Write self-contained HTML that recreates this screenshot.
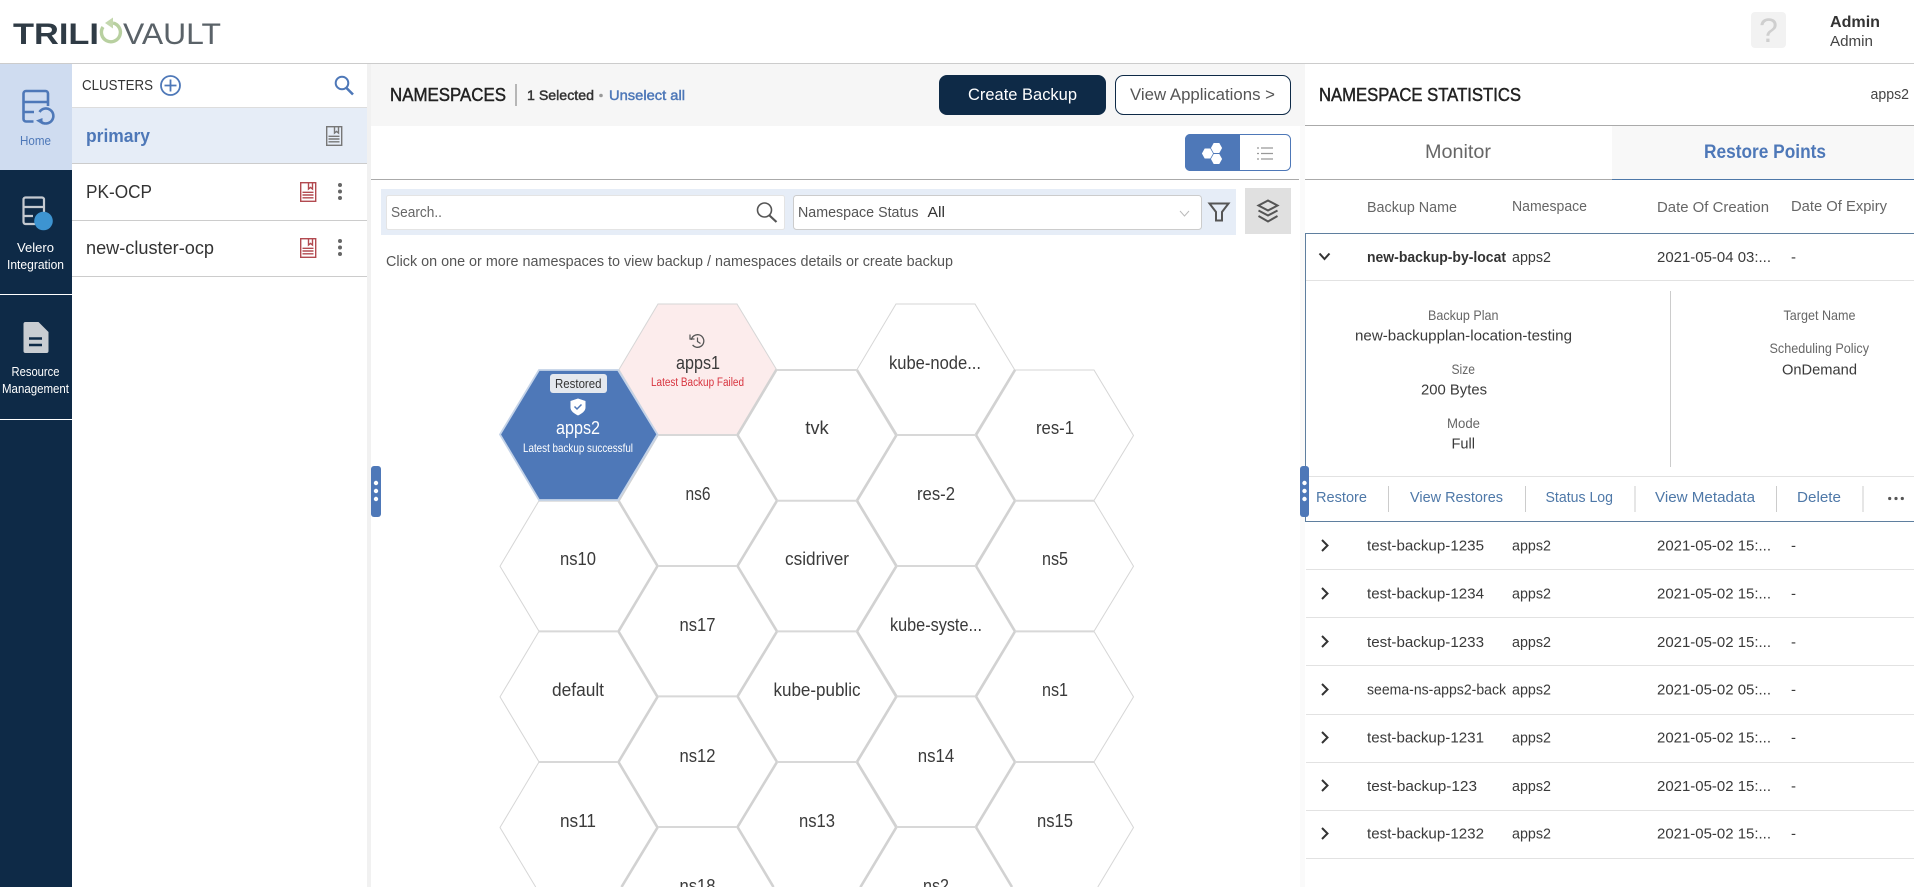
<!DOCTYPE html>
<html lang="en"><head><meta charset="utf-8"><title>TrilioVault</title>
<style>
html,body{margin:0;padding:0;background:#fff;overflow:hidden;width:1914px;height:887px}
svg{display:block}
text{font-family:"Liberation Sans",Arial,sans-serif;font-size:15px;fill:#3a3a3a}
.hx{font-size:18px;fill:#3a3a3a;text-anchor:middle}
.g{fill:#666}
.b{fill:#4e78a8}
.m{stroke:currentColor;stroke-width:.45}
.side{font-size:13px;fill:#fff;text-anchor:middle}
</style></head><body>
<svg xmlns="http://www.w3.org/2000/svg" width="1914" height="887" viewBox="0 0 1914 887">
<defs>
<polygon id="hex" points="0,65.5 39,0 118,0 157.5,65.5 118,130.5 39,130.5" fill="none" stroke="#d6d6d6" stroke-width="1"/>
<polyline id="hexa" points="35.7,125 0,65.5 39,0 118,0 157.5,65.5 121.8,125" fill="none" stroke="#d6d6d6" stroke-width="1"/>
<polyline id="hexb" points="3.3,59.5 39,0 118,0 154.2,59.5" fill="none" stroke="#d6d6d6" stroke-width="1"/>
<g id="bk" fill="none" stroke="currentColor" stroke-width="1.4"><rect x=".7" y=".7" width="15" height="18.6"/><path d="M8.5 1V7l2-1.6L12.5 7V1M2.5 10.3H13.5M2.5 13H13.5M2.5 15.8H13.5"/></g>
<polygon id="sh" points="-5.6,0 -2.8,-5 2.8,-5 5.6,0 2.8,5 -2.8,5" fill="#fff"/>
</defs>

<!-- top header -->
<rect x="0" y="63" width="1914" height="1" fill="#ccc"/>
<text x="13" y="44" textLength="86" lengthAdjust="spacingAndGlyphs" style="font-size:30px;fill:#2f3b45;font-weight:700">TRILI</text>
<path d="M113 23A9.5 9.5 0 1 1 103 27" fill="none" stroke="#b8d0a0" stroke-width="3.4"/>
<path d="M105 23L113 17.500V28.500Z" fill="#c4d8ae"/>
<text x="123" y="44" textLength="98" lengthAdjust="spacingAndGlyphs" style="font-size:30px;fill:#5a6268">VAULT</text>
<rect x="1751" y="12" width="35" height="36" rx="4" fill="#f2f2f2"/>
<text x="1768.500" y="42" text-anchor="middle" style="font-size:34px;fill:#cfcfcf">?</text>
<text x="1830" y="27" textLength="50" lengthAdjust="spacingAndGlyphs" style="font-size:16px;font-weight:700;fill:#333">Admin</text>
<text x="1830" y="46" textLength="43" lengthAdjust="spacingAndGlyphs" style="font-size:15px;fill:#444">Admin</text>

<!-- nav rail -->
<rect x="0" y="64" width="72" height="823" fill="#0e2a47"/>
<rect x="0" y="64" width="72" height="106" fill="#cfdcf0"/>
<g fill="none" stroke="#4e78b8" stroke-width="2.600">
<path d="M33.500 121.500H26a2.500 2.500 0 0 1-2.500-2.500V93.500A2.500 2.500 0 0 1 26 91H45.500a2.500 2.500 0 0 1 2.500 2.500V106M24 102H47.500M24 112H34"/>
<path d="M39.500 112A7.500 7.500 0 1 1 41 121.700"/>
</g>
<path d="M36 120.500L42.500 118V124.500Z" fill="#4e78b8"/>
<text class="side" x="35.500" y="145" style="fill:#4e78b8" textLength="31" lengthAdjust="spacingAndGlyphs">Home</text>
<g fill="none" stroke="#c5cad1" stroke-width="2.200">
<path d="M35 224H25.500a2 2 0 0 1-2-2V199.500a2 2 0 0 1 2-2H42a2 2 0 0 1 2 2V212M24 207H44M24 216H33"/>
</g>
<circle cx="43.500" cy="221" r="9.300" fill="#3d94d1"/>
<text class="side" x="35.500" y="252" textLength="37" lengthAdjust="spacingAndGlyphs">Velero</text>
<text class="side" x="35.500" y="269" textLength="57" lengthAdjust="spacingAndGlyphs">Integration</text>
<rect x="0" y="294" width="72" height="1" fill="#fff"/>
<path d="M25.500 322H38.500L48.500 332V351a2 2 0 0 1-2 2H25.500a2 2 0 0 1-2-2V324a2 2 0 0 1 2-2Z" fill="#c9cdd2"/>
<path d="M29 338.500H42M29 345H42" stroke="#0e2a47" stroke-width="2.600"/>
<text class="side" x="35.500" y="376" textLength="48" lengthAdjust="spacingAndGlyphs">Resource</text>
<text class="side" x="35.500" y="393" textLength="67" lengthAdjust="spacingAndGlyphs">Management</text>
<rect x="0" y="419" width="72" height="1" fill="#fff"/>

<!-- clusters column -->
<rect x="367" y="64" width="4" height="823" fill="#f1f1f1"/>
<text x="82" y="90" textLength="71" lengthAdjust="spacingAndGlyphs" style="font-size:15px;fill:#333">CLUSTERS</text>
<circle cx="170.500" cy="85.500" r="9.500" fill="none" stroke="#4e78b8" stroke-width="1.800"/>
<path d="M170.500 79.500V91.500M164.500 85.500H176.500" stroke="#4e78b8" stroke-width="1.800"/>
<circle cx="342" cy="83" r="6.300" fill="none" stroke="#4e78b8" stroke-width="2"/>
<path d="M346.500 88L353 94.500" stroke="#4e78b8" stroke-width="2.600"/>
<rect x="72" y="107" width="295" height="1" fill="#ddd"/>
<rect x="72" y="108" width="295" height="55" fill="#e6edf7"/>
<rect x="72" y="163" width="295" height="1" fill="#ccc"/>
<text x="86" y="142" textLength="64" lengthAdjust="spacingAndGlyphs" style="font-size:18px;font-weight:700;fill:#4e78b8">primary</text>
<use href="#bk" x="326" y="126" color="#777"/>
<text x="86" y="198" textLength="66" lengthAdjust="spacingAndGlyphs" style="font-size:18px;fill:#333">PK-OCP</text>
<use href="#bk" x="300" y="182" color="#b24a50"/>
<circle cx="340" cy="185" r="2" fill="#666"/><circle cx="340" cy="191.500" r="2" fill="#666"/><circle cx="340" cy="198" r="2" fill="#666"/>
<rect x="72" y="220" width="295" height="1" fill="#ccc"/>
<text x="86" y="254" textLength="128" lengthAdjust="spacingAndGlyphs" style="font-size:18px;fill:#333">new-cluster-ocp</text>
<use href="#bk" x="300" y="238" color="#b24a50"/>
<circle cx="340" cy="241" r="2" fill="#666"/><circle cx="340" cy="247.500" r="2" fill="#666"/><circle cx="340" cy="254" r="2" fill="#666"/>
<rect x="72" y="276" width="295" height="1" fill="#ccc"/>

<!-- namespaces header -->
<rect x="371" y="64" width="934" height="62" fill="#f6f6f6"/>
<text x="390" y="101" textLength="116" lengthAdjust="spacingAndGlyphs" class="m" style="font-size:18px;fill:#222;color:#222">NAMESPACES</text>
<rect x="515.500" y="84" width="1" height="22" fill="#777"/>
<text x="527" y="100" textLength="67" lengthAdjust="spacingAndGlyphs" class="m" style="font-size:14px;fill:#333;color:#333">1 Selected</text>
<circle cx="601" cy="95.500" r="1.800" fill="#999"/>
<text x="609" y="100" textLength="76" lengthAdjust="spacingAndGlyphs" class="m" style="font-size:14px;fill:#4e78b8;color:#4e78b8">Unselect all</text>
<rect x="939" y="75" width="167" height="40" rx="8" fill="#0e2a47"/>
<text x="968" y="100" textLength="109" lengthAdjust="spacingAndGlyphs" style="font-size:17px;fill:#fff">Create Backup</text>
<rect x="1115.500" y="75.500" width="175" height="39" rx="8" fill="#fff" stroke="#0e2a47"/>
<text x="1130" y="100" textLength="145" lengthAdjust="spacingAndGlyphs" style="font-size:17px;fill:#555">View Applications &gt;</text>

<!-- toggle -->
<rect x="1185.500" y="134.500" width="105" height="36" rx="5" fill="#fff" stroke="#4e78b8"/>
<path d="M1240 134H1190a5 5 0 0 0-5 5V166a5 5 0 0 0 5 5H1240Z" fill="#4e78b8"/>
<use href="#sh" x="1207.500" y="153.500"/><use href="#sh" x="1216.500" y="148"/><use href="#sh" x="1216.500" y="159"/>
<path d="M1257 148H1259M1261 148H1273M1257 153.500H1259M1261 153.500H1273M1257 159H1259M1261 159H1273" stroke="#999" stroke-width="1.200"/>
<rect x="371" y="179" width="928" height="1" fill="#aaa"/>

<!-- filter bar -->
<rect x="381" y="189" width="855" height="46" fill="#e6edf7"/>
<rect x="386.500" y="195.500" width="398" height="34" rx="2" fill="#fff" stroke="#e4e4e4"/>
<text x="391" y="217" textLength="51" lengthAdjust="spacingAndGlyphs" style="font-size:15px;fill:#666">Search..</text>
<circle cx="764.500" cy="210" r="7" fill="none" stroke="#555" stroke-width="1.600"/>
<path d="M769.500 215.500L776.500 222" stroke="#555" stroke-width="2.200"/>
<rect x="793.500" y="195.500" width="408" height="34" rx="3" fill="#fff" stroke="#ccc"/>
<text x="798" y="217" textLength="120.500" lengthAdjust="spacingAndGlyphs" style="font-size:15px;fill:#555">Namespace Status</text>
<text x="927.500" y="217" textLength="17.500" lengthAdjust="spacingAndGlyphs" style="font-size:15px;fill:#333">All</text>
<path d="M1180 211L1184.500 216L1189 211" fill="none" stroke="#bbb"/>
<path d="M1209.500 203.500H1228.500L1222 212V220.500H1216V212Z" fill="none" stroke="#555" stroke-width="2"/>
<rect x="1245" y="188" width="46" height="46" fill="#e0e0e0"/>
<path d="M1268 200.500l9.500 5-9.500 5-9.500-5ZM1258.500 210.500l9.500 5 9.500-5M1258.500 216l9.500 5.500 9.500-5.500" fill="none" stroke="#555" stroke-width="2"/>
<text x="386" y="266" textLength="567" lengthAdjust="spacingAndGlyphs" style="font-size:15px;fill:#555">Click on one or more namespaces to view backup / namespaces details or create backup</text>

<!-- hex grid: thin outlines -->
<use href="#hex" x="500" y="500.700"/><use href="#hex" x="500" y="631.400"/><use href="#hexa" x="500" y="762"/>
<use href="#hex" x="619" y="435"/><use href="#hex" x="619" y="565.700"/><use href="#hex" x="619" y="696.400"/><use href="#hexb" x="619" y="827"/>
<use href="#hex" x="738" y="370"/><use href="#hex" x="738" y="500.700"/><use href="#hex" x="738" y="631.400"/><use href="#hexa" x="738" y="762"/>
<use href="#hex" x="857" y="304"/><use href="#hex" x="857" y="435"/><use href="#hex" x="857" y="565.700"/><use href="#hex" x="857" y="696.400"/><use href="#hexb" x="857" y="827"/>
<use href="#hex" x="976" y="370"/><use href="#hex" x="976" y="500.700"/><use href="#hex" x="976" y="631.400"/><use href="#hexa" x="976" y="762"/>
<polygon points="619,369.500 658,304 737,304 776.500,369.500 737,434.500 658,434.500" fill="#fcecec" stroke="#d6d6d6"/>
<polygon points="500,434.500 539,370 618,370 657.500,434.500 618,500 539,500" fill="#4e78b8"/>
<!-- hex grid: heavier shared edges -->
<g fill="none" stroke="#d2d2d2" stroke-width="2.600" stroke-linejoin="miter">
<polyline points="657.500,435 618.500,500.700 657.500,566 618.500,631.400 657.500,696.900 618.500,762 657.500,827.500 621.500,887"/>
<polyline points="776.500,369.500 737.500,435 777,500.700 737.500,566 777,631.400 737.500,696.400 777,762 737.500,827 773.500,887"/>
<polyline points="857,370 896.500,435 857,500.700 896.500,566 857,631.400 896.500,696.400 857,762 896.500,827 860.500,887"/>
<polyline points="1015,370 976,435 1015,500.700 976,566 1015,631.400 976,696.400 1015,762 976,827 1012,887"/>
</g>
<path d="M539 500.700H618M539 631.400H618M539 762H618M658 435H737M658 566H737M658 696.400H737M658 827H737M777 370H857M777 500.700H857M777 631.400H857M777 762H857M896.500 435H976M896.500 566H976M896.500 696.400H976M896.500 827H976M1015 500.700H1094M1015 631.400H1094M1015 762H1094" fill="none" stroke="#d8d8d8" stroke-width="2"/>
<polygon points="500,434.500 539,370 618,370 657.500,434.500 618,500 539,500" fill="none" stroke="#c4d3e8" stroke-width="1.800"/>

<circle cx="697.500" cy="341" r="6.300" fill="none" stroke="#555" stroke-width="1.300" stroke-dasharray="34 6" transform="rotate(190 697.500 341)"/>
<path d="M697.500 337.500V341.500L700.500 343.500M690 334.500V339H694.500" fill="none" stroke="#555" stroke-width="1.200"/>
<text class="hx" x="698" y="369" textLength="44" lengthAdjust="spacingAndGlyphs">apps1</text>
<text x="651" y="386" textLength="93" lengthAdjust="spacingAndGlyphs" style="font-size:11.500px;fill:#d8343f">Latest Backup Failed</text>

<rect x="550" y="374" width="57" height="19" rx="3" fill="#e4e8ee"/>
<text x="555" y="388" textLength="46.500" lengthAdjust="spacingAndGlyphs" style="font-size:13px;fill:#333">Restored</text>
<path d="M578 398.500L585.500 401V407.500C585.500 411 582 413.500 578 415.500C574 413.500 570.500 411 570.500 407.500V401Z" fill="#fff"/>
<path d="M574.500 406.500L577 409L581.500 404.500" fill="none" stroke="#4e78b8" stroke-width="1.500"/>
<text class="hx" x="578" y="434" textLength="44" lengthAdjust="spacingAndGlyphs" style="fill:#fff">apps2</text>
<text x="523" y="452" textLength="110" lengthAdjust="spacingAndGlyphs" style="font-size:12px;fill:#fff">Latest backup successful</text>

<text class="hx" x="817" y="434" textLength="23.500" lengthAdjust="spacingAndGlyphs">tvk</text>
<text class="hx" x="935" y="369" textLength="92" lengthAdjust="spacingAndGlyphs">kube-node...</text>
<text class="hx" x="1055" y="434" textLength="38" lengthAdjust="spacingAndGlyphs">res-1</text>
<text class="hx" x="698" y="500" textLength="25" lengthAdjust="spacingAndGlyphs">ns6</text>
<text class="hx" x="936" y="500" textLength="38" lengthAdjust="spacingAndGlyphs">res-2</text>
<text class="hx" x="578" y="565" textLength="36" lengthAdjust="spacingAndGlyphs">ns10</text>
<text class="hx" x="817" y="565" textLength="64" lengthAdjust="spacingAndGlyphs">csidriver</text>
<text class="hx" x="1055" y="565" textLength="26" lengthAdjust="spacingAndGlyphs">ns5</text>
<text class="hx" x="697.500" y="631" textLength="36" lengthAdjust="spacingAndGlyphs">ns17</text>
<text class="hx" x="936" y="631" textLength="92" lengthAdjust="spacingAndGlyphs">kube-syste...</text>
<text class="hx" x="578" y="696" textLength="52" lengthAdjust="spacingAndGlyphs">default</text>
<text class="hx" x="817" y="696" textLength="87" lengthAdjust="spacingAndGlyphs">kube-public</text>
<text class="hx" x="1055" y="696" textLength="26" lengthAdjust="spacingAndGlyphs">ns1</text>
<text class="hx" x="697.500" y="762" textLength="36" lengthAdjust="spacingAndGlyphs">ns12</text>
<text class="hx" x="936" y="762" textLength="36.500" lengthAdjust="spacingAndGlyphs">ns14</text>
<text class="hx" x="578" y="827" textLength="36" lengthAdjust="spacingAndGlyphs">ns11</text>
<text class="hx" x="817" y="827" textLength="36" lengthAdjust="spacingAndGlyphs">ns13</text>
<text class="hx" x="1055" y="827" textLength="36" lengthAdjust="spacingAndGlyphs">ns15</text>
<svg x="0" y="870" width="1914" height="17" overflow="hidden">
<text class="hx" x="697.500" y="22" textLength="36" lengthAdjust="spacingAndGlyphs">ns18</text>
<text class="hx" x="936" y="22" textLength="26" lengthAdjust="spacingAndGlyphs">ns2</text>
</svg>

<!-- right panel -->
<rect x="1300" y="126" width="5" height="761" fill="#fafafa"/>
<rect x="1305" y="64" width="609" height="823" fill="#fff"/>
<text x="1319" y="101" textLength="202" lengthAdjust="spacingAndGlyphs" class="m" style="font-size:18px;fill:#222;color:#222">NAMESPACE STATISTICS</text>
<text x="1870.500" y="99" textLength="38.500" lengthAdjust="spacingAndGlyphs" style="font-size:15px;fill:#444">apps2</text>
<rect x="1305" y="125" width="609" height="1" fill="#aaa"/>
<rect x="1612" y="126" width="302" height="53" fill="#f8f8f8"/>
<text x="1425" y="158" textLength="66" lengthAdjust="spacingAndGlyphs" style="font-size:19px;fill:#666">Monitor</text>
<text x="1704" y="158" textLength="122" lengthAdjust="spacingAndGlyphs" style="font-size:19px;font-weight:700;fill:#4e78b8">Restore Points</text>
<rect x="1305" y="179" width="307" height="1" fill="#aaa"/>
<rect x="1612" y="179" width="302" height="1" fill="#4e78a8"/>
<text class="g" x="1367" y="212" textLength="90" lengthAdjust="spacingAndGlyphs">Backup Name</text>
<text class="g" x="1512" y="211" textLength="75" lengthAdjust="spacingAndGlyphs">Namespace</text>
<text class="g" x="1657" y="212" textLength="112" lengthAdjust="spacingAndGlyphs">Date Of Creation</text>
<text class="g" x="1791" y="211" textLength="96" lengthAdjust="spacingAndGlyphs">Date Of Expiry</text>

<rect x="1305" y="233" width="609" height="1" fill="#5f7f9f"/>
<rect x="1305" y="233" width="1" height="289" fill="#5f7f9f"/>
<path d="M1319.500 253.500L1324.500 259L1329.500 253.500" fill="none" stroke="#333" stroke-width="2"/>
<text x="1367" y="262" textLength="139" lengthAdjust="spacingAndGlyphs" style="font-size:15px;font-weight:700;fill:#333">new-backup-by-locat</text>
<text x="1512" y="262" textLength="39" lengthAdjust="spacingAndGlyphs">apps2</text>
<text x="1657" y="262" textLength="114" lengthAdjust="spacingAndGlyphs">2021-05-04 03:...</text>
<text x="1791" y="262">-</text>
<rect x="1306" y="280" width="608" height="1" fill="#e2e2e2"/>

<text class="g" x="1428" y="320" textLength="70.500" lengthAdjust="spacingAndGlyphs" style="font-size:14px">Backup Plan</text>
<text x="1355" y="340.500" textLength="217" lengthAdjust="spacingAndGlyphs">new-backupplan-location-testing</text>
<text class="g" x="1451.500" y="374" textLength="23.500" lengthAdjust="spacingAndGlyphs" style="font-size:14px">Size</text>
<text x="1421" y="394.500" textLength="66" lengthAdjust="spacingAndGlyphs">200 Bytes</text>
<text class="g" x="1447" y="428" textLength="33" lengthAdjust="spacingAndGlyphs" style="font-size:14px">Mode</text>
<text x="1451.500" y="448.500" textLength="23.500" lengthAdjust="spacingAndGlyphs">Full</text>
<rect x="1670" y="291" width="1" height="176" fill="#ccc"/>
<text class="g" x="1783.500" y="320" textLength="72" lengthAdjust="spacingAndGlyphs" style="font-size:14px">Target Name</text>
<text class="g" x="1769.500" y="353" textLength="99.500" lengthAdjust="spacingAndGlyphs" style="font-size:14px">Scheduling Policy</text>
<text x="1782" y="374.500" textLength="75" lengthAdjust="spacingAndGlyphs">OnDemand</text>

<rect x="1306" y="476" width="608" height="1" fill="#e2e2e2"/>
<text class="b" x="1316" y="502" textLength="51" lengthAdjust="spacingAndGlyphs">Restore</text>
<rect x="1388" y="486" width="1" height="26" fill="#ccc"/>
<text class="b" x="1410" y="502" textLength="93" lengthAdjust="spacingAndGlyphs">View Restores</text>
<rect x="1525" y="486" width="1" height="26" fill="#ccc"/>
<text class="b" x="1545.500" y="502" textLength="67.500" lengthAdjust="spacingAndGlyphs">Status Log</text>
<rect x="1634.500" y="486" width="1" height="26" fill="#ccc"/>
<text class="b" x="1655" y="502" textLength="100" lengthAdjust="spacingAndGlyphs">View Metadata</text>
<rect x="1776" y="486" width="1" height="26" fill="#ccc"/>
<text class="b" x="1797" y="502" textLength="44" lengthAdjust="spacingAndGlyphs">Delete</text>
<rect x="1862.500" y="486" width="1" height="26" fill="#ccc"/>
<circle cx="1889.700" cy="498.500" r="1.600" fill="#555"/><circle cx="1896" cy="498.500" r="1.600" fill="#555"/><circle cx="1902.300" cy="498.500" r="1.600" fill="#555"/>
<rect x="1305" y="521" width="609" height="1" fill="#5f7f9f"/>

<!-- rows -->
<path d="M1322 540L1327.500 545.500L1322 551" fill="none" stroke="#333" stroke-width="2"/>
<text x="1367" y="550.500" textLength="117" lengthAdjust="spacingAndGlyphs">test-backup-1235</text>
<text x="1512" y="550.500" textLength="39" lengthAdjust="spacingAndGlyphs">apps2</text>
<text x="1657" y="550.500" textLength="114" lengthAdjust="spacingAndGlyphs">2021-05-02 15:...</text>
<text x="1791" y="550.500">-</text>
<rect x="1306" y="569" width="608" height="1" fill="#e2e2e2"/>

<path d="M1322 588L1327.500 593.500L1322 599" fill="none" stroke="#333" stroke-width="2"/>
<text x="1367" y="598.500" textLength="117" lengthAdjust="spacingAndGlyphs">test-backup-1234</text>
<text x="1512" y="598.500" textLength="39" lengthAdjust="spacingAndGlyphs">apps2</text>
<text x="1657" y="598.500" textLength="114" lengthAdjust="spacingAndGlyphs">2021-05-02 15:...</text>
<text x="1791" y="598.500">-</text>
<rect x="1306" y="617" width="608" height="1" fill="#e2e2e2"/>

<path d="M1322 636L1327.500 641.500L1322 647" fill="none" stroke="#333" stroke-width="2"/>
<text x="1367" y="647" textLength="117" lengthAdjust="spacingAndGlyphs">test-backup-1233</text>
<text x="1512" y="647" textLength="39" lengthAdjust="spacingAndGlyphs">apps2</text>
<text x="1657" y="647" textLength="114" lengthAdjust="spacingAndGlyphs">2021-05-02 15:...</text>
<text x="1791" y="647">-</text>
<rect x="1306" y="665" width="608" height="1" fill="#e2e2e2"/>

<path d="M1322 684L1327.500 689.500L1322 695" fill="none" stroke="#333" stroke-width="2"/>
<text x="1367" y="694.500" textLength="139" lengthAdjust="spacingAndGlyphs">seema-ns-apps2-back</text>
<text x="1512" y="694.500" textLength="39" lengthAdjust="spacingAndGlyphs">apps2</text>
<text x="1657" y="694.500" textLength="114" lengthAdjust="spacingAndGlyphs">2021-05-02 05:...</text>
<text x="1791" y="694.500">-</text>
<rect x="1306" y="714" width="608" height="1" fill="#e2e2e2"/>

<path d="M1322 732L1327.500 737.500L1322 743" fill="none" stroke="#333" stroke-width="2"/>
<text x="1367" y="742.500" textLength="117" lengthAdjust="spacingAndGlyphs">test-backup-1231</text>
<text x="1512" y="742.500" textLength="39" lengthAdjust="spacingAndGlyphs">apps2</text>
<text x="1657" y="742.500" textLength="114" lengthAdjust="spacingAndGlyphs">2021-05-02 15:...</text>
<text x="1791" y="742.500">-</text>
<rect x="1306" y="762" width="608" height="1" fill="#e2e2e2"/>

<path d="M1322 780L1327.500 785.500L1322 791" fill="none" stroke="#333" stroke-width="2"/>
<text x="1367" y="791" textLength="110" lengthAdjust="spacingAndGlyphs">test-backup-123</text>
<text x="1512" y="791" textLength="39" lengthAdjust="spacingAndGlyphs">apps2</text>
<text x="1657" y="791" textLength="114" lengthAdjust="spacingAndGlyphs">2021-05-02 15:...</text>
<text x="1791" y="791">-</text>
<rect x="1306" y="810" width="608" height="1" fill="#e2e2e2"/>

<path d="M1322 828L1327.500 833.500L1322 839" fill="none" stroke="#333" stroke-width="2"/>
<text x="1367" y="838.500" textLength="117" lengthAdjust="spacingAndGlyphs">test-backup-1232</text>
<text x="1512" y="838.500" textLength="39" lengthAdjust="spacingAndGlyphs">apps2</text>
<text x="1657" y="838.500" textLength="114" lengthAdjust="spacingAndGlyphs">2021-05-02 15:...</text>
<text x="1791" y="838.500">-</text>
<rect x="1306" y="858" width="608" height="1" fill="#e2e2e2"/>

<!-- drag handles -->
<rect x="371" y="466" width="10" height="51" rx="3" fill="#4e78b8"/>
<circle cx="376" cy="483" r="2.200" fill="#fff"/><circle cx="376" cy="491" r="2.200" fill="#fff"/><circle cx="376" cy="499" r="2.200" fill="#fff"/>
<rect x="1300" y="466" width="9" height="51" rx="3" fill="#4e78b8"/>
<circle cx="1304.500" cy="483" r="2.200" fill="#fff"/><circle cx="1304.500" cy="491" r="2.200" fill="#fff"/><circle cx="1304.500" cy="499" r="2.200" fill="#fff"/>
</svg>
</body></html>
